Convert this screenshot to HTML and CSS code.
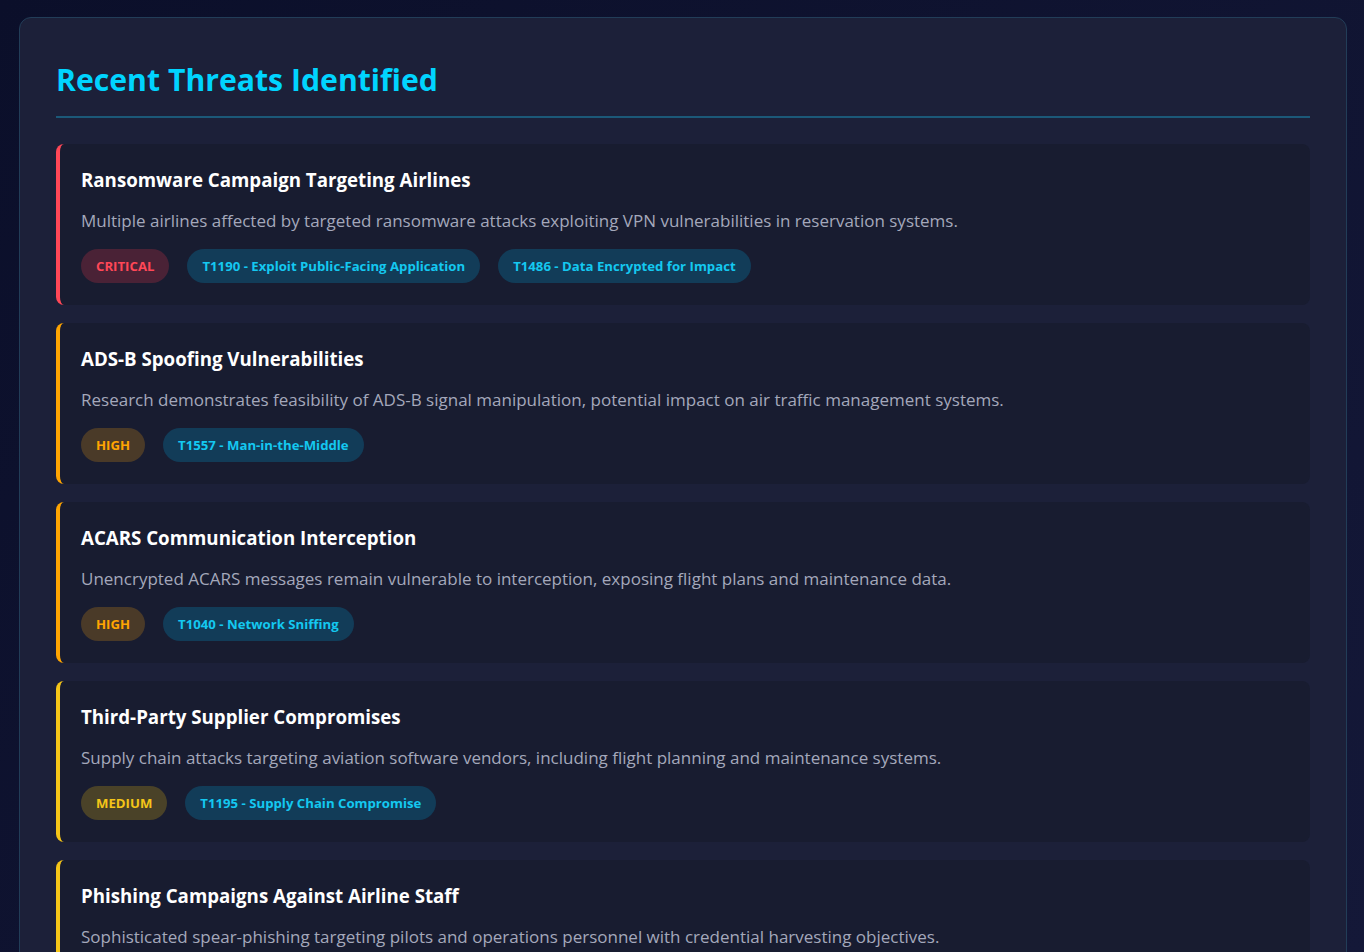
FILE: index.html
```html
<!DOCTYPE html>
<html lang="en">
<head>
<meta charset="utf-8">
<title>Recent Threats Identified</title>
<link rel="stylesheet" href="styles.css">
</head>
<body>
<section class="panel">
  <h2 class="panel-title">Recent Threats Identified</h2>
  <div class="threat-list">
    <article class="threat threat-critical">
      <h3 class="threat-title">Ransomware Campaign Targeting Airlines</h3>
      <p class="threat-desc">Multiple airlines affected by targeted ransomware attacks exploiting VPN vulnerabilities in reservation systems.</p>
      <div class="tags">
        <span class="tag sev-critical">CRITICAL</span>
        <span class="tag mitre">T1190 - Exploit Public-Facing Application</span>
        <span class="tag mitre">T1486 - Data Encrypted for Impact</span>
      </div>
    </article>
    <article class="threat threat-high">
      <h3 class="threat-title">ADS-B Spoofing Vulnerabilities</h3>
      <p class="threat-desc">Research demonstrates feasibility of ADS-B signal manipulation, potential impact on air traffic management systems.</p>
      <div class="tags">
        <span class="tag sev-high">HIGH</span>
        <span class="tag mitre">T1557 - Man-in-the-Middle</span>
      </div>
    </article>
    <article class="threat threat-high">
      <h3 class="threat-title">ACARS Communication Interception</h3>
      <p class="threat-desc">Unencrypted ACARS messages remain vulnerable to interception, exposing flight plans and maintenance data.</p>
      <div class="tags">
        <span class="tag sev-high">HIGH</span>
        <span class="tag mitre">T1040 - Network Sniffing</span>
      </div>
    </article>
    <article class="threat threat-medium">
      <h3 class="threat-title">Third-Party Supplier Compromises</h3>
      <p class="threat-desc">Supply chain attacks targeting aviation software vendors, including flight planning and maintenance systems.</p>
      <div class="tags">
        <span class="tag sev-medium">MEDIUM</span>
        <span class="tag mitre">T1195 - Supply Chain Compromise</span>
      </div>
    </article>
    <article class="threat threat-medium">
      <h3 class="threat-title">Phishing Campaigns Against Airline Staff</h3>
      <p class="threat-desc">Sophisticated spear-phishing targeting pilots and operations personnel with credential harvesting objectives.</p>
      <div class="tags">
        <span class="tag sev-medium">MEDIUM</span>
        <span class="tag mitre">T1566 - Phishing</span>
      </div>
    </article>
  </div>
</section>
</body>
</html>
```

FILE: styles.css
```css
* { box-sizing: border-box; }

html, body {
  margin: 0;
}

body {
  padding: 17px 17px 40px 19px;
  background: linear-gradient(135deg, #0b0f2a 0%, #141838 100%);
  background-attachment: fixed;
  min-height: 100vh;
  font-family: "Open Sans", "Noto Sans", "DejaVu Sans", sans-serif;
  color: #ffffff;
}

.panel {
  background: #1c2039;
  border: 1px solid #223d58;
  border-radius: 12px;
  padding: 36px;
}

.panel-title {
  margin: 6px 0 26px;
  padding-bottom: 16px;
  border-bottom: 2px solid #1b5878;
  color: #00d4ff;
  font-size: 30.2px;
  line-height: 40px;
  font-weight: 700;
}

.threat-list {
  display: flex;
  flex-direction: column;
  gap: 18px;
}

.threat {
  background: #181c30;
  border-left: 4px solid #ff4757;
  border-radius: 8px;
  padding: 24px 24px 22px 21px;
}

.threat-high { border-left-color: #ffa502; }
.threat-medium { border-left-color: #f5c518; }

.threat-title {
  margin: 0 0 17px;
  font-size: 18.7px;
  line-height: 24px;
  font-weight: 700;
  color: #ffffff;
}

.threat-desc {
  margin: 0 0 16px;
  font-size: 17px;
  line-height: 24px;
  color: #a4a8bb;
}

.tags {
  display: flex;
  flex-wrap: wrap;
  gap: 18px;
}

.tag {
  display: inline-block;
  height: 34px;
  padding: 0 15px;
  border-radius: 17px;
  font-size: 13.2px;
  line-height: 34px;
  font-weight: 700;
}

.sev-critical { background: #4a2236; color: #ff4757; }
.sev-high { background: #4a3a28; color: #ffa502; }
.sev-medium { background: #4a4228; color: #f5c518; }

.mitre {
  background: #123c58;
  color: #14c8f0;
}
```
